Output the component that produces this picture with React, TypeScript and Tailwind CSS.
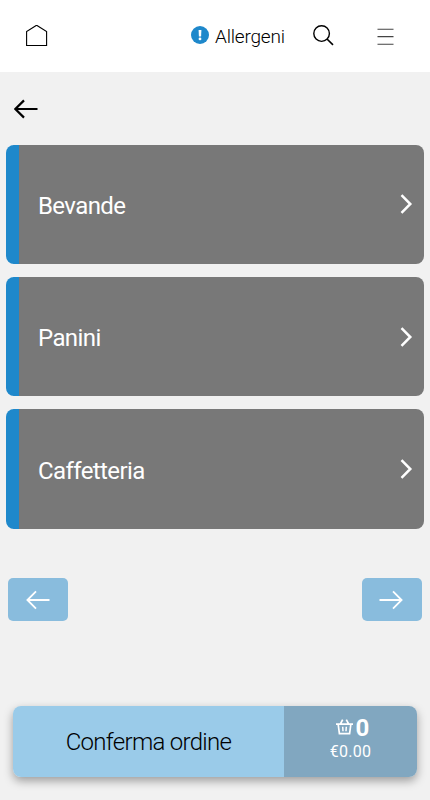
type IconProps = {
  className?: string
}

const HomeIcon: React.FC<IconProps> = ({ className }) => (
  <svg className={className} width="22" height="23" viewBox="0 0 22 23" fill="none" stroke="currentColor" strokeWidth="1.1">
    <path d="M0.6 20.5V6.5L10.6 0.2L20.6 6.5V20.5Z" />
  </svg>
)

const SearchIcon: React.FC<IconProps> = ({ className }) => (
  <svg className={className} width="21" height="21" viewBox="0 0 21 21" fill="none" stroke="currentColor" strokeWidth="1.4">
    <circle cx="8.6" cy="8.6" r="7.8" />
    <path d="M14 14L20 19.9" strokeWidth="1.6" />
  </svg>
)

const AlertIcon: React.FC<IconProps> = ({ className }) => (
  <svg className={className} width="18" height="18" viewBox="0 0 18 18">
    <circle cx="9" cy="9" r="9" fill="#1e88cb" />
    <path d="M7.6 4H10.4L10.1 10.4H7.9Z" fill="#fff" />
    <circle cx="9" cy="12.9" r="1.4" fill="#fff" />
  </svg>
)

const MenuIcon: React.FC<IconProps> = ({ className }) => (
  <svg className={className} width="17" height="18" viewBox="0 0 17 18" fill="none" stroke="#444" strokeWidth="1.1">
    <path d="M0.5 2.3H16.5M0.5 9.6H16.5M0.5 17.2H16.5" />
  </svg>
)

const ArrowIcon: React.FC<IconProps & { strokeWidth?: number }> = ({ className, strokeWidth = 1.8 }) => (
  <svg className={className} width="24" height="20" viewBox="0 0 24 20" fill="none" stroke="currentColor" strokeWidth={strokeWidth}>
    <path d="M10 1.4L1.4 10L10 18.6M1.4 10H23.5" />
  </svg>
)

const ChevronIcon: React.FC<IconProps> = ({ className }) => (
  <svg className={className} width="13" height="20" viewBox="0 0 13 20" fill="none" stroke="currentColor" strokeWidth="2.5">
    <path d="M1.5 1.2L10.3 10L1.5 18.8" />
  </svg>
)

const BasketIcon: React.FC<IconProps> = ({ className }) => (
  <svg className={className} width="17" height="16" viewBox="0 0 17 16" fill="none" stroke="currentColor" strokeWidth="1.7">
    <path d="M0 5.2H17M2.2 5.5L3.4 14.6H13.6L14.8 5.5M4.4 5L6.7 0.7M12.6 5L10.3 0.7" />
    <path d="M6.7 7.8L7 12.2M10.3 7.8L10 12.2" strokeWidth="1.5" />
  </svg>
)

const categories: { name: string }[] = [
  { name: 'Bevande' },
  { name: 'Panini' },
  { name: 'Caffetteria' },
]

const Header: React.FC = () => (
  <header className="flex h-[72px] items-center bg-white pr-9 pl-[26px] text-black">
    <HomeIcon />
    <div className="ml-auto flex items-center">
      <AlertIcon className="mr-[6px] mb-[3px]" />
      <span className="w-[70px] pt-[2px] text-[19px] leading-6 font-light tracking-[-0.2px] whitespace-nowrap">
        Allergeni
      </span>
    </div>
    <SearchIcon className="mr-[43px] mb-px ml-[28px]" />
    <MenuIcon />
  </header>
)

const CategoryCard: React.FC<{ name: string }> = ({ name }) => (
  <button className="flex h-[119.3px] w-full items-center rounded-lg border-l-[13px] border-[#1e88cb] bg-[#787878] pr-[11px] pl-[19px] text-white">
    <span className="pt-[3px] text-2xl tracking-[-0.6px]">{name}</span>
    <ChevronIcon className="ml-auto" />
  </button>
)

const App: React.FC = () => {
  return (
    <div className="flex h-[800px] w-full flex-col overflow-hidden bg-[#f1f1f1] font-['Roboto',sans-serif]">
      <Header />
      <div className="flex h-[72.5px] items-center pt-[2px] pl-[13.5px] text-black">
        <ArrowIcon strokeWidth={2.2} />
      </div>
      <main className="flex flex-col gap-[13.2px] px-[6px]">
        {categories.map((item) => (
          <CategoryCard key={item.name} name={item.name} />
        ))}
      </main>
      <div className="mt-[49px] flex justify-between px-[8.4px] text-white">
        <button className="flex h-[43px] w-[60px] items-center justify-center rounded-[5px] bg-[#89bcdd] pt-px">
          <ArrowIcon />
        </button>
        <button className="flex h-[43px] w-[60px] items-center justify-center rounded-[5px] bg-[#89bcdd] pt-px pr-px">
          <ArrowIcon className="rotate-180" />
        </button>
      </div>
      <footer className="mx-[13px] mt-auto mb-[23px] flex h-[71.5px] overflow-hidden rounded-lg shadow-[0_4px_10px_rgba(0,0,0,0.35)]">
        <div className="flex w-[271px] items-center justify-center bg-[#9acbe9] pt-[2px] text-2xl font-light tracking-[-0.7px] text-black">
          Conferma ordine
        </div>
        <div className="flex flex-1 flex-col items-center bg-[#81a7c0] pt-[9px] text-white">
          <div className="flex h-[26px] items-center gap-[3px] pl-[4px]">
            <BasketIcon className="mb-[2px]" />
            <span className="text-2xl font-bold">0</span>
          </div>
          <span className="pt-px text-base leading-5 tracking-[0.3px]">€0.00</span>
        </div>
      </footer>
    </div>
  )
}
export default App
